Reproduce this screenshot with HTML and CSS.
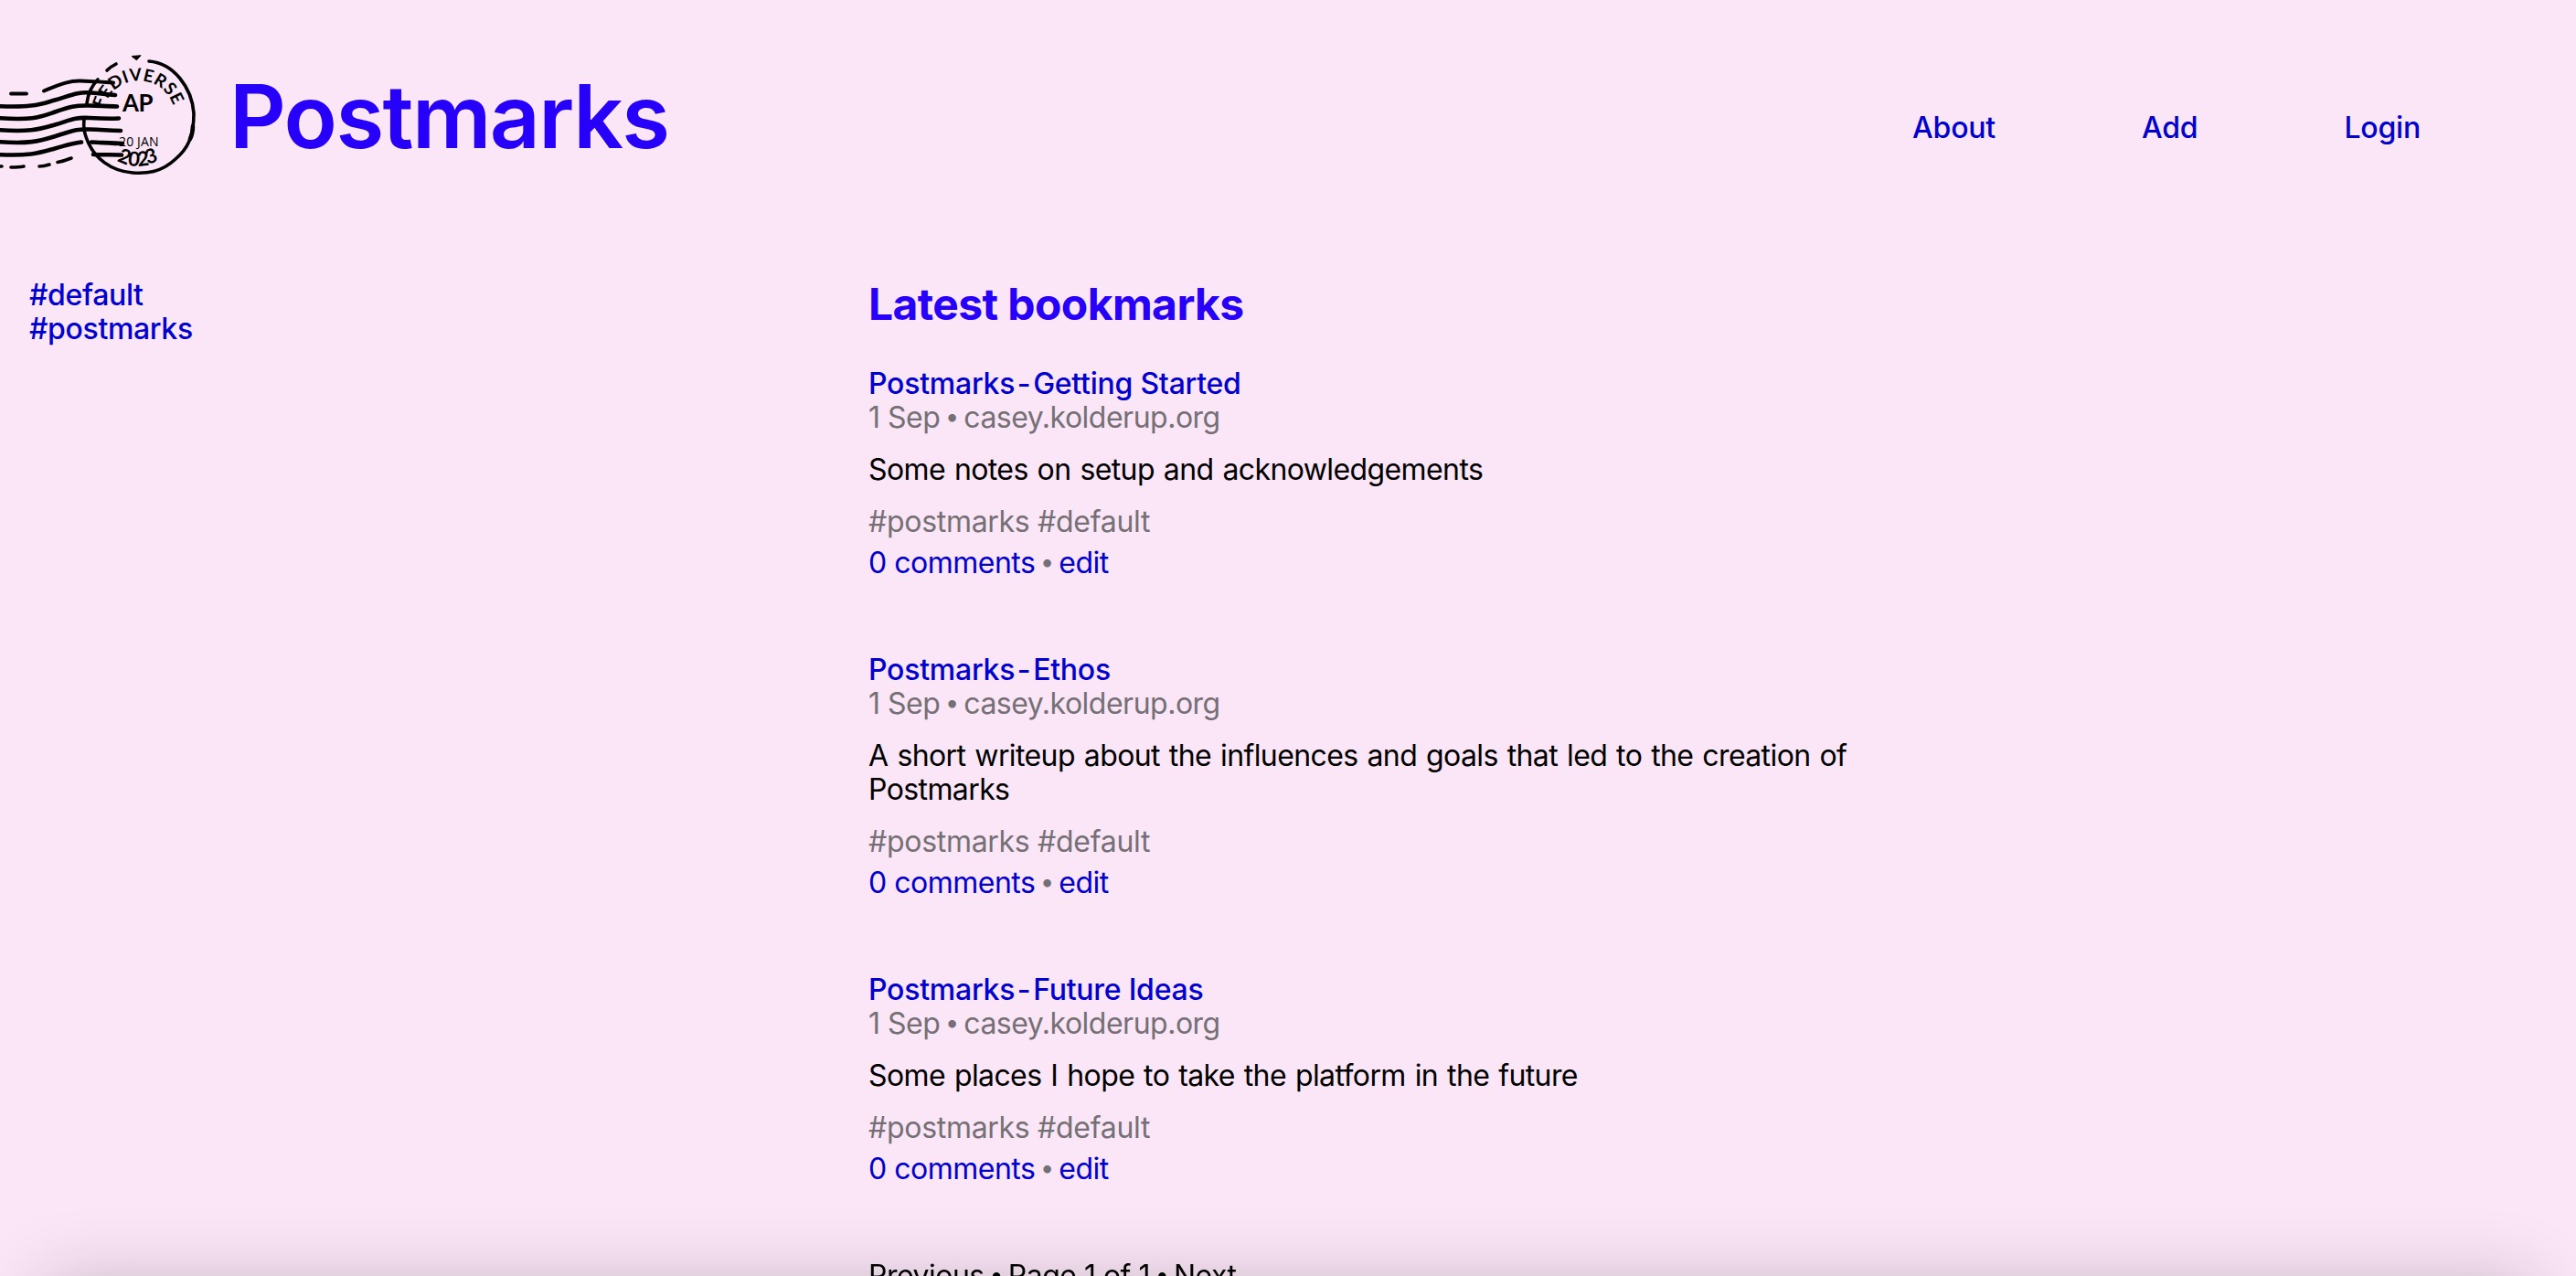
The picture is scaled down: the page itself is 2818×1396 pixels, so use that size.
FILE: index.html
```
<!DOCTYPE html>
<html lang="en">
<head>
    <meta charset="UTF-8">
    <meta name="viewport" content="width=device-width, initial-scale=1.0">
    <title>Postmarks</title>
    <link rel="stylesheet" href="styles.css">
</head>
<body>

<header class="site-header">
    <a href="#" class="brand">
        <svg class="logo" viewBox="0 0 240 170" width="240" height="170">
            <!-- wavy cancellation lines -->
            <g fill="none" stroke="#000" stroke-width="4.6" stroke-linecap="round">
                <path d="M12 62.500h17" stroke-width="3.8" />
                <path d="M48 59.500C62 54 74 48 88 48.500S112 49.500 124 50.500" stroke-width="4" />
                <path d="M-4 76C36 78 44 74 60 69.500S84 60 100 61.500S118 63 126 64" />
                <path d="M-4 89C36 92 44 88 60 82.500S82 75 98 75.500S120 76 128 76.500" />
                <path d="M-4 102C34 105 44 101 60 96.500S80 88 98 89S118 90 130 89.500" />
                <path d="M-4 115C34 118 44 114 62 108.500S82 101 98 101.500S118 103 132 103" />
                <path d="M-4 129C34 131 44 127 60 122.500S78 117 89 115.500M100 115.500C112 116 124 117 134 117" />
                <path d="M102 129C114 129.500 124 129 133 129.500" />
                <path d="M-4 142h6M12 143c6 0 9 0 14-1M43 142c5 0 8-1 11-2M63 137.500c6-1 10-2.500 15-4.500" stroke-width="3.6" />
            </g>
            <!-- round stamp -->
            <g fill="none" stroke="#000" stroke-width="3.6" stroke-linecap="round">
                <path d="M163 27C190 29 210 56 212 84C212 110 205 123 192 134C176 149 160 150 145 149C120 147 104 132 97 117C92 106 91 100 92 89" />
                <path d="M117 37q4-4 10-7M95 73q2-16 12-26" />
                <path d="M211 98q0 8-3 14" stroke-width="4.500" />
            </g>
            <path d="M144 21.500l10-.8-4.500 5z" stroke="#000" />
            <path id="arc" d="M113.500 79A39.500 39.500 0 0 1 190.500 79" fill="none" />
            <text class="stamp-arc"><textPath href="#arc" textLength="102">FEDIVERSE</textPath></text>
            <text class="stamp-ap" x="134" y="81.500" textLength="33" lengthAdjust="spacingAndGlyphs">AP</text>
            <text class="stamp-day" x="130" y="119.500" textLength="43">20 JAN</text>
            <g class="stamp-year">
                <text transform="translate(127.500 136) rotate(22)">2</text>
                <text transform="translate(139.500 141) rotate(6)">0</text>
                <text transform="translate(151 142) rotate(-6)">2</text>
                <text transform="translate(161.500 140) rotate(-18)">3</text>
            </g>
        </svg>
        <h1 class="site-title">Postmarks</h1>
    </a>
    <nav class="site-nav">
        <a href="#">About</a>
        <a href="#">Add</a>
        <a href="#">Login</a>
    </nav>
</header>

<div class="page">
    <aside class="tag-list">
        <a href="#">#default</a>
        <a href="#">#postmarks</a>
    </aside>

    <main class="bookmarks">
        <h2>Latest bookmarks</h2>

        <article class="bookmark">
            <a href="#" class="bookmark-title">Postmarks<span class="dash">-</span>Getting Started</a>
            <div class="meta">1 Sep<span class="dot">•</span>casey.kolderup.org</div>
            <p class="description">Some notes on setup and acknowledgements</p>
            <div class="tags">#postmarks #default</div>
            <div class="controls"><a href="#">0 comments</a><span class="dot">•</span><a href="#">edit</a></div>
        </article>

        <article class="bookmark">
            <a href="#" class="bookmark-title">Postmarks<span class="dash">-</span>Ethos</a>
            <div class="meta">1 Sep<span class="dot">•</span>casey.kolderup.org</div>
            <p class="description">A short writeup about the influences and goals that led to the creation of Postmarks</p>
            <div class="tags">#postmarks #default</div>
            <div class="controls"><a href="#">0 comments</a><span class="dot">•</span><a href="#">edit</a></div>
        </article>

        <article class="bookmark">
            <a href="#" class="bookmark-title">Postmarks<span class="dash">-</span>Future Ideas</a>
            <div class="meta">1 Sep<span class="dot">•</span>casey.kolderup.org</div>
            <p class="description">Some places I hope to take the platform in the future</p>
            <div class="tags">#postmarks #default</div>
            <div class="controls"><a href="#">0 comments</a><span class="dot">•</span><a href="#">edit</a></div>
        </article>

        <div class="pagination">Previous<span class="dot">•</span>Page 1 of 1<span class="dot">•</span>Next</div>
    </main>
</div>

<div class="bottom-shade"></div>

</body>
</html>
```
FILE: styles.css
```
* {
    box-sizing: border-box;
}
body {
    margin: 0;
    height: 1396px;
    overflow: hidden;
    background-color: #fbe6f7;
    color: #000;
    font-family: Inter, "Liberation Sans", sans-serif;
    font-size: 32px;
    line-height: 37px;
    letter-spacing: -0.5px;
}
a {
    color: #0000d0;
    text-decoration: none;
}
.site-header {
    display: flex;
    justify-content: space-between;
    align-items: flex-start;
    height: 304px;
    padding-top: 40px;
}
.brand {
    display: flex;
}
.logo {
    display: block;
}
.site-title {
    margin: 29px 0 0 11px;
    color: #2600f8;
    font-size: 96px;
    line-height: 116px;
    font-weight: 600;
    letter-spacing: -1.6px;
}
.site-nav {
    display: flex;
    gap: 160px;
    padding: 81px 170px 0 0;
    font-weight: 500;
    letter-spacing: -0.2px;
}
.stamp-arc {
    font: 700 19px Lato, sans-serif;
}
.stamp-ap {
    font: 700 27px Lato, sans-serif;
}
.stamp-day {
    font: 400 14px "Open Sans", sans-serif;
}
.stamp-year {
    font: 700 22px Lato, sans-serif;
}
.page {
    display: flex;
}
.tag-list {
    display: flex;
    flex-direction: column;
    width: 950px;
    padding-left: 32px;
    font-weight: 500;
    letter-spacing: -0.35px;
}
.bookmarks {
    width: 1100px;
}
h2 {
    margin: 0 0 39px;
    color: #2600f8;
    font-size: 48px;
    line-height: 58px;
    font-weight: 700;
    letter-spacing: -0.6px;
}
.bookmark {
    margin-bottom: 80px;
}
.bookmark-title {
    display: block;
    font-weight: 500;
    letter-spacing: -0.25px;
}
.dash {
    display: inline-block;
    width: 20px;
    text-align: center;
}
.dot {
    display: inline-block;
    width: 26px;
    font-size: 27px;
    line-height: 1;
    text-align: center;
    position: relative;
    top: -3px;
}
.meta,
.tags,
.controls {
    color: #757075;
}
.tags {
    letter-spacing: -0.3px;
}
.description {
    margin: 20px 0;
    letter-spacing: -0.6px;
    word-spacing: 1.5px;
}
.controls {
    margin-top: 8px;
}
.pagination {
    position: relative;
    z-index: 2;
}
.bottom-shade {
    position: fixed;
    top: calc(100% + 4px);
    left: 45px;
    right: 45px;
    height: 200px;
    box-shadow: 0 0 80px rgba(0, 0, 0, 0.2);
}
```
